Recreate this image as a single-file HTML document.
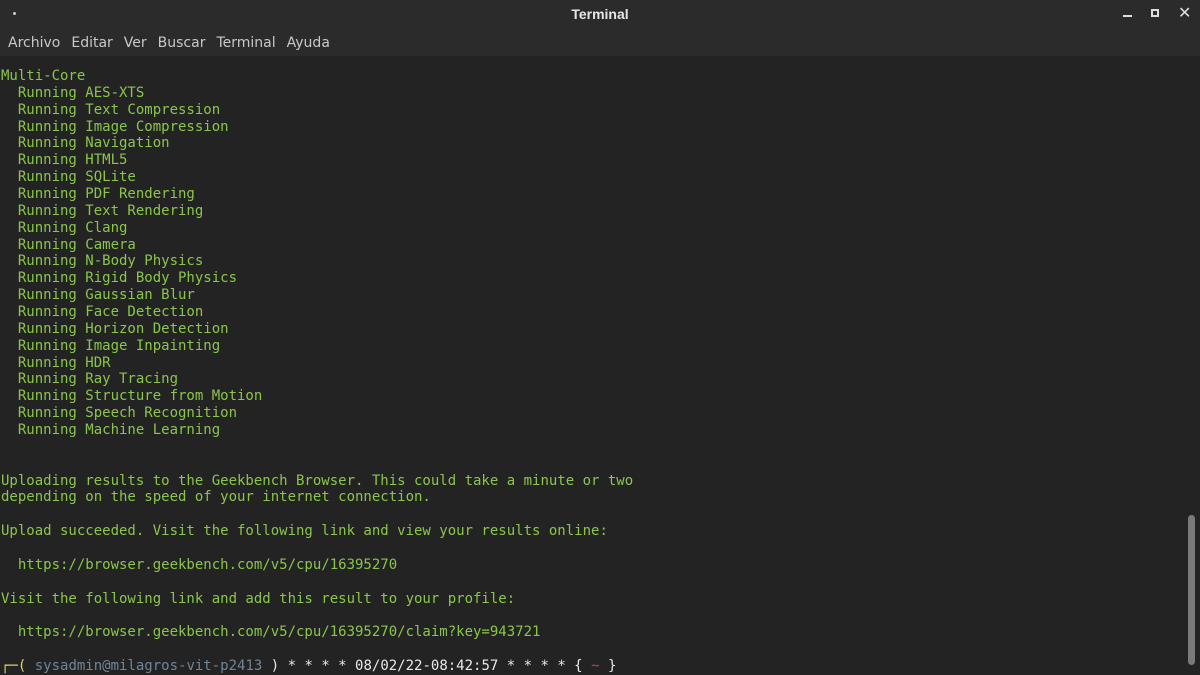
<!DOCTYPE html>
<html><head><meta charset="utf-8"><style>
html,body{margin:0;padding:0;width:1200px;height:675px;overflow:hidden;background:#232323}
.tb{position:absolute;left:0;top:0;width:1200px;height:56px;background:#2b2b2b}
.title{position:absolute;left:0;width:1200px;top:6px;text-align:center;font:bold 14px "Liberation Sans",sans-serif;color:#e6e6e6}
.dot{position:absolute;left:13px;top:12px;width:3px;height:3px;border-radius:50%;background:#ccc}
.menu{position:absolute;left:8px;top:35px;font:14px "DejaVu Sans","Liberation Sans",sans-serif;color:#c8c8c8}
.menu span{margin-right:11px}
.term{position:absolute;left:1px;top:68px;margin:0;font:14px "DejaVu Sans Mono","Liberation Mono",monospace;line-height:16.86px;color:#8ac64b;white-space:pre}
.sb{position:absolute;left:1188px;top:515px;width:7px;height:150px;border-radius:4px;background:#7a7a7a}
.u{color:#6f8599}.w{color:#e8e8e8}.r{color:#d03c3c}.y{color:#e8d36a}
</style></head><body>
<div class="tb"></div>
<div class="dot"></div>
<div class="title">Terminal</div>
<div style="position:absolute;left:1123px;top:15px;width:9px;height:2px;background:#ddd"></div>
<div style="position:absolute;left:1152px;top:10px;width:6px;height:6px;border:1px solid #ddd;box-sizing:border-box;outline:1px solid #ddd"></div>
<div style="position:absolute;left:1178px;top:3px;font:bold 16px 'DejaVu Sans',sans-serif;color:#ddd">✕</div>
<div class="menu"><span>Archivo</span><span>Editar</span><span>Ver</span><span>Buscar</span><span>Terminal</span><span>Ayuda</span></div>
<pre class="term">Multi-Core
  Running AES-XTS
  Running Text Compression
  Running Image Compression
  Running Navigation
  Running HTML5
  Running SQLite
  Running PDF Rendering
  Running Text Rendering
  Running Clang
  Running Camera
  Running N-Body Physics
  Running Rigid Body Physics
  Running Gaussian Blur
  Running Face Detection
  Running Horizon Detection
  Running Image Inpainting
  Running HDR
  Running Ray Tracing
  Running Structure from Motion
  Running Speech Recognition
  Running Machine Learning


Uploading results to the Geekbench Browser. This could take a minute or two
depending on the speed of your internet connection.

Upload succeeded. Visit the following link and view your results online:

  https://browser.geekbench.com/v5/cpu/16395270

Visit the following link and add this result to your profile:

  https://browser.geekbench.com/v5/cpu/16395270/claim?key=943721

<span class="y">┌─(</span> <span class="u">sysadmin@milagros-vit-p2413</span> <span class="w">) * * * * 08/02/22-08:42:57 * * * * {</span> <span class="r">~</span> <span class="w">}</span></pre>
<div class="sb"></div>
</body></html>
